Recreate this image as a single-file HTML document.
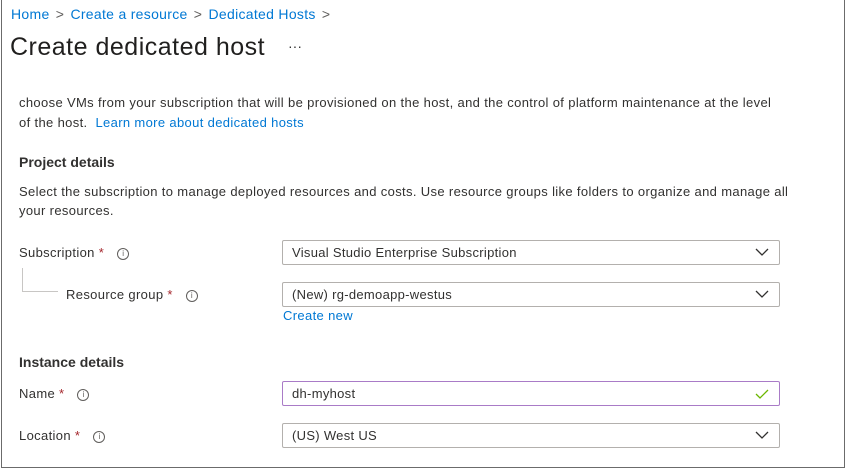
<!DOCTYPE html>
<html><head><style>
body{margin:0;width:850px;height:473px;background:#fff;font-family:"Liberation Sans",sans-serif;color:#323130;position:relative;overflow:hidden}
.a{position:absolute;white-space:nowrap}
.frame{position:absolute;left:1px;top:-2px;width:842px;height:469px;border:1.5px solid #6b6b6b;border-top:none}
.t{font-size:13px;letter-spacing:0.35px}
.lnk{color:#0078d4}
.star{color:#a4262c}
.i{display:inline-block;width:10px;height:10px;border:1px solid #605e5c;border-radius:50%;font-size:8px;line-height:10px;text-align:center;color:#605e5c;vertical-align:1px;margin-left:13px;letter-spacing:0}
.box{position:absolute;left:282px;font-size:13px;letter-spacing:0.3px;line-height:24px;padding-left:9px;box-sizing:border-box;width:498px;height:25px;border:1px solid #b3b0ad;border-radius:2px}
.chev{position:absolute;right:10px;top:7px}
</style></head><body>
<div class="frame"></div>
<div class="a" style="left:11px;top:6px;font-size:14px;letter-spacing:0.3px"><span class="lnk">Home</span> <span style="color:#605e5c;margin:0 2px">&gt;</span> <span class="lnk">Create a resource</span> <span style="color:#605e5c;margin:0 2px">&gt;</span> <span class="lnk">Dedicated Hosts</span> <span style="color:#605e5c;margin:0 2px">&gt;</span></div>
<div class="a" style="left:10px;top:33px;font-size:25px;letter-spacing:0.5px;color:#201f1e">Create dedicated host</div>
<div class="a" style="left:288px;top:38px;font-size:14px">···</div>
<div class="a t" style="left:19px;top:95px">choose VMs from your subscription that will be provisioned on the host, and the control of platform maintenance at the level</div>
<div class="a t" style="left:19px;top:115px">of the host.&nbsp; <span class="lnk">Learn more about dedicated hosts</span></div>
<div class="a" style="left:19px;top:154px;font-size:14px;font-weight:bold;color:#323130">Project details</div>
<div class="a t" style="left:19px;top:184px">Select the subscription to manage deployed resources and costs. Use resource groups like folders to organize and manage all</div>
<div class="a t" style="left:19px;top:203px">your resources.</div>
<div class="a t" style="left:19px;top:245px">Subscription <span class="star">*</span><span class="i">i</span></div>
<div class="a" style="left:22px;top:268px;width:35px;height:23px;border-left:1px solid #c8c6c4;border-bottom:1px solid #c8c6c4"></div>
<div class="a t" style="left:66px;top:287px">Resource group <span class="star">*</span><span class="i">i</span></div>
<div class="box" style="top:240px">Visual Studio Enterprise Subscription<svg class="chev" width="14" height="9" viewBox="0 0 14 9"><path d="M1 1l6 6 6-6" fill="none" stroke="#323130" stroke-width="1.3"/></svg></div>
<div class="box" style="top:282px">(New) rg-demoapp-westus<svg class="chev" width="14" height="9" viewBox="0 0 14 9"><path d="M1 1l6 6 6-6" fill="none" stroke="#323130" stroke-width="1.3"/></svg></div>
<div class="a t lnk" style="left:283px;top:308px">Create new</div>
<div class="a" style="left:19px;top:354px;font-size:14px;font-weight:bold">Instance details</div>
<div class="a t" style="left:19px;top:386px">Name <span class="star">*</span><span class="i">i</span></div>
<div class="box" style="top:381px;border-color:#a97bc7">dh-myhost<svg class="chev" width="14" height="10" viewBox="0 0 14 10" style="top:7px"><path d="M1 5l4 4 8-8" fill="none" stroke="#6bb700" stroke-width="1.3"/></svg></div>
<div class="a t" style="left:19px;top:428px">Location <span class="star">*</span><span class="i">i</span></div>
<div class="box" style="top:423px">(US) West US<svg class="chev" width="14" height="9" viewBox="0 0 14 9"><path d="M1 1l6 6 6-6" fill="none" stroke="#323130" stroke-width="1.3"/></svg></div>
</body></html>
